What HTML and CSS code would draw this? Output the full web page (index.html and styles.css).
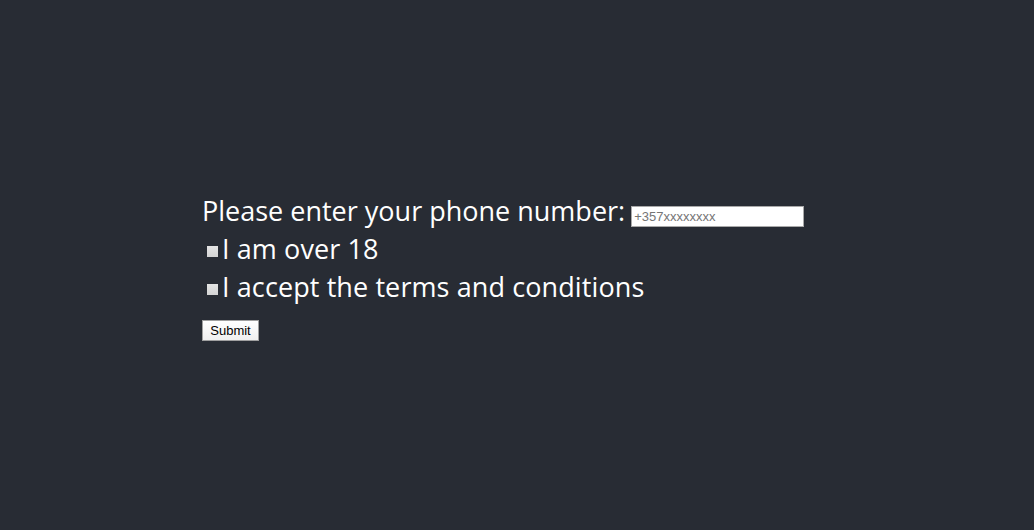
FILE: index.html
```html
<!DOCTYPE html>
<html>
<head>
<meta charset="utf-8">
<link rel="stylesheet" href="styles.css">
</head>
<body>
<div class="app">
  <form class="form">
    <div class="row">
      <label class="label label-phone">Please enter your phone number:</label>
      <input class="phone" type="text" placeholder="+357xxxxxxxx">
    </div>
    <div class="row">
      <span class="box"></span><span class="label">I am over 18</span>
    </div>
    <div class="row">
      <span class="box"></span><span class="label">I accept the terms and conditions</span>
    </div>
    <div class="actions">
      <button class="submit" type="button">Submit</button>
    </div>
  </form>
</div>
</body>
</html>
```
FILE: styles.css
```css
html, body {
  margin: 0;
  padding: 0;
  background: #282c34;
}
.app {
  height: 530px;
  display: flex;
  align-items: flex-start;
  padding: 191px 0 0 202px;
  box-sizing: border-box;
}
.form {
  display: flex;
  flex-direction: column;
  font-family: "Open Sans", sans-serif;
  font-size: 27px;
  letter-spacing: 0.1px;
  color: #ffffff;
}
.row {
  display: flex;
  align-items: center;
  height: 38px;
}
.label {
  white-space: nowrap;
}
.label-phone {
  letter-spacing: 0;
}
.phone {
  margin-left: 6px;
  width: 173px;
  height: 21px;
  box-sizing: border-box;
  border: 1px solid #a9a9a9;
  padding: 1px 2px;
  font-family: "Liberation Sans", Arial, sans-serif;
  font-size: 13px;
  letter-spacing: 0;
  background: #fff;
  margin-top: 12px;
}
.phone::placeholder {
  color: #757575;
}
.box {
  width: 11px;
  height: 11px;
  background: linear-gradient(#e4e4e4, #d4d4d4);
  margin-left: 5px;
  margin-right: 4px;
  margin-top: 6px;
}
.actions {
  margin-top: 1px;
}
.submit {
  width: 57px;
  height: 21px;
  box-sizing: border-box;
  border: 1px solid #a0a0a0;
  background: linear-gradient(#ffffff, #f0f0f0);
  font-family: "Liberation Sans", Arial, sans-serif;
  font-size: 13px;
  letter-spacing: 0;
  color: #000;
  padding: 0;
}
```
